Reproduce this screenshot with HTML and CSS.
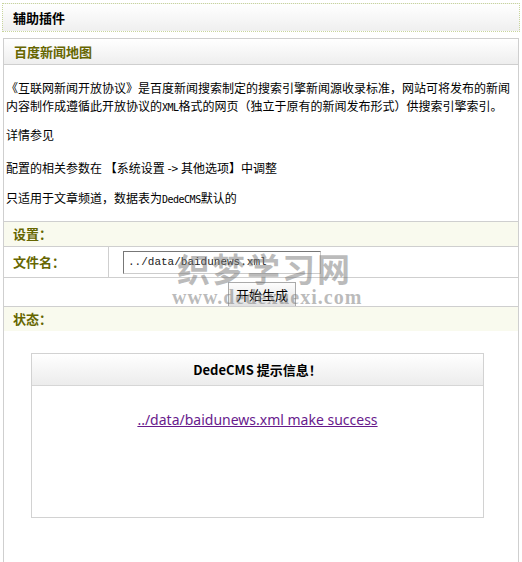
FILE: index.html
```html
<!DOCTYPE html>
<html lang="zh-CN">
<head>
    <meta charset="UTF-8">
    <title>辅助插件 - 百度新闻地图</title>
    <link rel="stylesheet" href="styles.css">
</head>
<body>
    <div class="top-bar">辅助插件</div>
    <div class="panel">
        <div class="panel-title">百度新闻地图</div>
        <div class="intro">
            <p class="lead">《互联网新闻开放协议》是百度新闻搜索制定的搜索引擎新闻源收录标准，网站可将发布的新闻内容制作成遵循此开放协议的<span class="mono">XML</span>格式的网页（独立于原有的新闻发布形式）供搜索引擎索引。</p>
            <p class="see">详情参见</p>
            <p>配置的相关参数在 【系统设置 -&gt; 其他选项】中调整</p>
            <p>只适用于文章频道，数据表为<span class="mono">DedeCMS</span>默认的</p>
        </div>
        <div class="form-area">
            <div class="section-row">设置：</div>
            <div class="field-row">
                <div class="field-label">文件名：</div>
                <div class="field-input">
                    <input type="text" class="text-input" value="../data/baidunews.xml">
                </div>
            </div>
            <div class="button-row">
                <button type="button" class="make-btn">开始生成</button>
            </div>
            <div class="section-row">状态：</div>
            <!-- site watermark laid over the form -->
            <div class="watermark">
                <div class="wm-cn">织梦学习网</div>
                <div class="wm-en">www.dedexuexi.com</div>
            </div>
        </div>
        <div class="status-area">
            <div class="msg-box">
                <div class="msg-head">DedeCMS 提示信息！</div>
                <div class="msg-body">
                    <a href="#" class="msg-link">../data/baidunews.xml make success</a>
                </div>
            </div>
        </div>
    </div>
</body>
</html>
```

FILE: styles.css
```css
body {
    margin: 0;
    font-family: "Noto Sans CJK SC", "Noto Sans", sans-serif;
    font-size: 12px;
    color: #000;
    background-color: #fff;
}
.top-bar {
    margin: 3px 2px 0 2px;
    height: 27px;
    line-height: 27px;
    padding-left: 10px;
    border: 1px dotted #c9d69c;
    background: linear-gradient(#fff, #efefef);
    font-size: 13px;
    font-weight: bold;
}
.panel {
    margin: 6px 3px 0 3px;
    border: 1px solid #cfcfcf;
    border-bottom: none;
    min-height: 530px;
}
.panel-title {
    height: 25px;
    line-height: 25px;
    padding-left: 10px;
    border-bottom: 1px solid #cfcfcf;
    background: linear-gradient(#fff, #eeeeee);
    color: #666600;
    font-size: 13px;
    font-weight: bold;
}
.intro {
    padding: 14px 2px 14px 2px;
}
.intro p {
    margin: 0 0 12px 0;
    line-height: 18px;
}
.intro p.lead {
    margin-bottom: 11px;
}
.intro p.see {
    margin-bottom: 15px;
}
.intro p:last-child {
    margin-bottom: 0;
}
.mono {
    font-family: "DejaVu Sans Mono", monospace;
    font-size: 10px;
    line-height: 10px;
    letter-spacing: -0.5px;
}
.form-area {
    position: relative;
}
.section-row {
    height: 24px;
    line-height: 24px;
    padding-left: 9px;
    border-top: 1px solid #cfcfcf;
    background-color: #f9faee;
    color: #666600;
    font-size: 13px;
    font-weight: bold;
}
.section-row:last-of-type {
    border-bottom: 1px solid #cfcfcf;
}
.field-row {
    display: flex;
    height: 30px;
    border-top: 1px solid #cfcfcf;
}
.field-label {
    width: 95px;
    padding-left: 9px;
    line-height: 30px;
    border-right: 1px solid #cfcfcf;
    color: #666600;
    font-size: 13px;
    font-weight: bold;
}
.field-input {
    display: flex;
    align-items: center;
    padding-left: 14px;
}
.text-input {
    box-sizing: border-box;
    width: 198px;
    height: 23px;
    margin: 0;
    padding: 0 4px;
    border: 1px solid #ccc;
    border-top-color: #777;
    border-left-color: #777;
    font-family: "Liberation Mono", monospace;
    font-size: 11px;
    color: #222;
}
.button-row {
    display: flex;
    justify-content: center;
    align-items: flex-end;
    height: 28px;
    border-top: 1px solid #cfcfcf;
}
.make-btn {
    height: 24px;
    padding: 0 7px;
    margin-left: 2px;
    border: 1px solid #aaa;
    border-bottom: none;
    background: linear-gradient(#fdfdfd, #e2e2e2);
    font-family: "Noto Sans CJK SC", sans-serif;
    font-size: 13px;
    color: #000;
}
.watermark {
    position: absolute;
    left: 168px;
    top: 29px;
    color: rgba(120, 120, 120, 0.5);
    font-family: "Liberation Serif", serif;
    pointer-events: none;
}
.wm-cn {
    font-family: "Noto Sans CJK SC", serif;
    font-size: 33px;
    font-weight: bold;
    line-height: 36px;
    letter-spacing: 2px;
    padding-left: 5px;
}
.wm-en {
    font-size: 20px;
    line-height: 22px;
    font-weight: bold;
    letter-spacing: 1px;
}
.status-area {
    padding: 22px 0 30px 27px;
}
.msg-box {
    width: 451px;
    border: 1px solid #d2d2d2;
}
.msg-head {
    height: 31px;
    line-height: 31px;
    text-align: center;
    border-bottom: 1px solid #d6d6d6;
    background: linear-gradient(#fff, #ececec);
    font-family: "Noto Sans CJK SC", sans-serif;
    font-size: 13px;
    font-weight: bold;
}
.msg-body {
    height: 131px;
    padding-top: 24px;
    box-sizing: border-box;
    text-align: center;
}
.msg-link {
    font-family: "Noto Sans", sans-serif;
    font-size: 14px;
    color: #681a8c;
}
```
